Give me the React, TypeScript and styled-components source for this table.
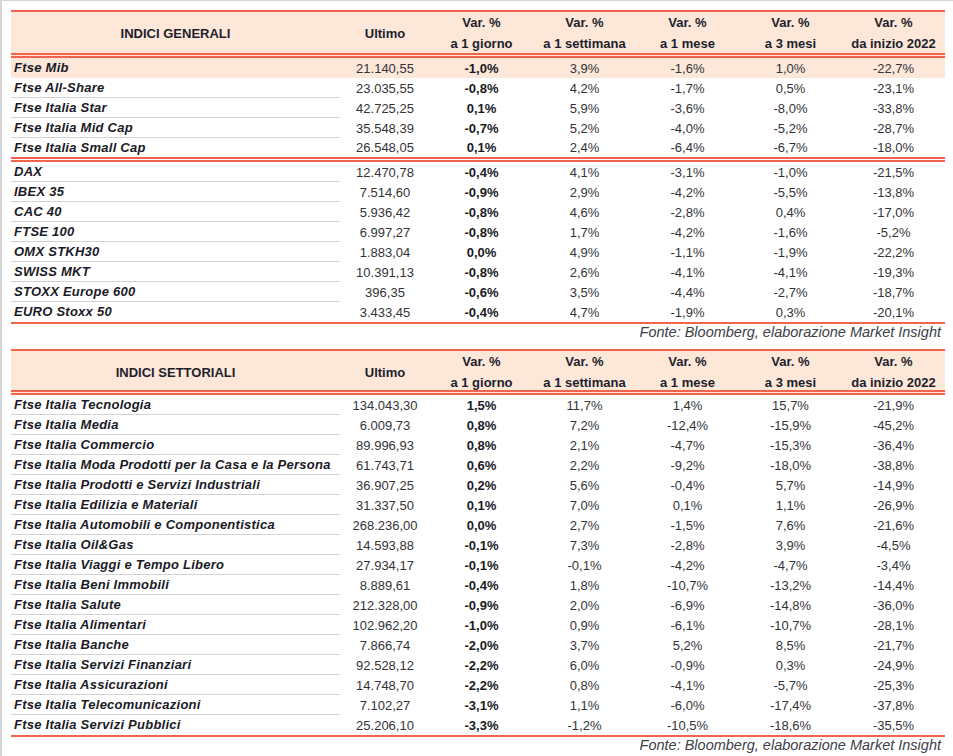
import React from 'react';
import styled, { createGlobalStyle } from 'styled-components';

type Row = [string, string, string, string, string, string, string];

const generali: Row[][] = [
  [
    ['Ftse Mib', '21.140,55', '-1,0%', '3,9%', '-1,6%', '1,0%', '-22,7%'],
    ['Ftse All-Share', '23.035,55', '-0,8%', '4,2%', '-1,7%', '0,5%', '-23,1%'],
    ['Ftse Italia Star', '42.725,25', '0,1%', '5,9%', '-3,6%', '-8,0%', '-33,8%'],
    ['Ftse Italia Mid Cap', '35.548,39', '-0,7%', '5,2%', '-4,0%', '-5,2%', '-28,7%'],
    ['Ftse Italia Small Cap', '26.548,05', '0,1%', '2,4%', '-6,4%', '-6,7%', '-18,0%'],
  ],
  [
    ['DAX', '12.470,78', '-0,4%', '4,1%', '-3,1%', '-1,0%', '-21,5%'],
    ['IBEX 35', '7.514,60', '-0,9%', '2,9%', '-4,2%', '-5,5%', '-13,8%'],
    ['CAC 40', '5.936,42', '-0,8%', '4,6%', '-2,8%', '0,4%', '-17,0%'],
    ['FTSE 100', '6.997,27', '-0,8%', '1,7%', '-4,2%', '-1,6%', '-5,2%'],
    ['OMX STKH30', '1.883,04', '0,0%', '4,9%', '-1,1%', '-1,9%', '-22,2%'],
    ['SWISS MKT', '10.391,13', '-0,8%', '2,6%', '-4,1%', '-4,1%', '-19,3%'],
    ['STOXX Europe 600', '396,35', '-0,6%', '3,5%', '-4,4%', '-2,7%', '-18,7%'],
    ['EURO Stoxx 50', '3.433,45', '-0,4%', '4,7%', '-1,9%', '0,3%', '-20,1%'],
  ],
];

const settoriali: Row[][] = [
  [
    ['Ftse Italia Tecnologia', '134.043,30', '1,5%', '11,7%', '1,4%', '15,7%', '-21,9%'],
    ['Ftse Italia Media', '6.009,73', '0,8%', '7,2%', '-12,4%', '-15,9%', '-45,2%'],
    ['Ftse Italia Commercio', '89.996,93', '0,8%', '2,1%', '-4,7%', '-15,3%', '-36,4%'],
    ['Ftse Italia Moda Prodotti per la Casa e la Persona', '61.743,71', '0,6%', '2,2%', '-9,2%', '-18,0%', '-38,8%'],
    ['Ftse Italia Prodotti e Servizi Industriali', '36.907,25', '0,2%', '5,6%', '-0,4%', '5,7%', '-14,9%'],
    ['Ftse Italia Edilizia e Materiali', '31.337,50', '0,1%', '7,0%', '0,1%', '1,1%', '-26,9%'],
    ['Ftse Italia Automobili e Componentistica', '268.236,00', '0,0%', '2,7%', '-1,5%', '7,6%', '-21,6%'],
    ['Ftse Italia Oil&Gas', '14.593,88', '-0,1%', '7,3%', '-2,8%', '3,9%', '-4,5%'],
    ['Ftse Italia Viaggi e Tempo Libero', '27.934,17', '-0,1%', '-0,1%', '-4,2%', '-4,7%', '-3,4%'],
    ['Ftse Italia Beni Immobili', '8.889,61', '-0,4%', '1,8%', '-10,7%', '-13,2%', '-14,4%'],
    ['Ftse Italia Salute', '212.328,00', '-0,9%', '2,0%', '-6,9%', '-14,8%', '-36,0%'],
    ['Ftse Italia Alimentari', '102.962,20', '-1,0%', '0,9%', '-6,1%', '-10,7%', '-28,1%'],
    ['Ftse Italia Banche', '7.866,74', '-2,0%', '3,7%', '5,2%', '8,5%', '-21,7%'],
    ['Ftse Italia Servizi Finanziari', '92.528,12', '-2,2%', '6,0%', '-0,9%', '0,3%', '-24,9%'],
    ['Ftse Italia Assicurazioni', '14.748,70', '-2,2%', '0,8%', '-4,1%', '-5,7%', '-25,3%'],
    ['Ftse Italia Telecomunicazioni', '7.102,27', '-3,1%', '1,1%', '-6,0%', '-17,4%', '-37,8%'],
    ['Ftse Italia Servizi Pubblici', '25.206,10', '-3,3%', '-1,2%', '-10,5%', '-18,6%', '-35,5%'],
  ],
];

const periods = ['a 1 giorno', 'a 1 settimana', 'a 1 mese', 'a 3 mesi', 'da inizio 2022'];

const RED = '#f0644e';
const PEACH = '#fce7d9';
const COLS = '329px 90px repeat(5, 103px)';

const GlobalStyle = createGlobalStyle`
  body {
    margin: 0;
    background: #fff;
    font-family: "Liberation Sans", Arial, sans-serif;
  }
`;

const Page = styled.div`
  min-height: 100vh;
  box-sizing: border-box;
  border-top: 1px solid #d6d6d6;
  border-left: 2px solid #d6d6d6;
  padding: 9px 0 0 9px;
`;

const Table = styled.div`
  width: 934px;
`;

const Header = styled.div<{ $h: number }>`
  display: grid;
  grid-template-columns: ${COLS};
  height: ${(p) => p.$h}px;
  background: ${PEACH};
  border-top: 2px solid ${RED};
  border-bottom: 5px double ${RED};
`;

const HeadCell = styled.div`
  display: flex;
  flex-direction: column;
  align-items: center;
  justify-content: center;
  padding-bottom: 1px;
  font-size: 13px;
  font-weight: 700;
  line-height: 21px;
  color: #1e1e2c;
  white-space: nowrap;
`;

const DataRow = styled.div<{ $hl?: boolean; $end?: 'double' | 'single' }>`
  display: grid;
  grid-template-columns: ${COLS};
  height: ${(p) => (p.$end === 'double' ? 19 : 20)}px;
  background: ${(p) => (p.$hl ? PEACH : 'transparent')};
  border-bottom: ${(p) =>
    p.$end === 'double' ? `5px double ${RED}` : p.$end === 'single' ? `2px solid ${RED}` : 'none'};
`;

const Name = styled.div<{ $line: boolean }>`
  box-sizing: border-box;
  display: flex;
  align-items: center;
  padding-left: 3px;
  border-bottom: 1px solid ${(p) => (p.$line ? '#d3d3d3' : 'transparent')};
  font-size: 13px;
  font-weight: 700;
  font-style: italic;
  letter-spacing: 0.25px;
  color: #1a1a26;
  white-space: nowrap;
`;

const Value = styled.div<{ $bold?: boolean }>`
  display: flex;
  align-items: center;
  justify-content: center;
  font-size: 13px;
  font-weight: ${(p) => (p.$bold ? 700 : 400)};
  color: ${(p) => (p.$bold ? '#1a1a26' : '#333338')};
`;

const Source = styled.div`
  width: 934px;
  box-sizing: border-box;
  padding-right: 4px;
  margin-bottom: 9px;
  text-align: right;
  font-size: 14.5px;
  font-style: italic;
  line-height: 16px;
  color: #404048;
`;

const Section = ({ title, groups, headH }: { title: string; groups: Row[][]; headH: number }) => (
  <>
    <Table>
      <Header $h={headH}>
        <HeadCell>{title}</HeadCell>
        <HeadCell>Ultimo</HeadCell>
        {periods.map((p) => (
          <HeadCell key={p}>
            <span>Var. %</span>
            <span>{p}</span>
          </HeadCell>
        ))}
      </Header>
      {groups.map((rows, gi) =>
        rows.map((r, ri) => {
          const lastInGroup = ri === rows.length - 1;
          const lastGroup = gi === groups.length - 1;
          const end = lastInGroup ? (lastGroup ? 'single' : 'double') : undefined;
          const hl = r[0] === 'Ftse Mib';
          return (
            <DataRow key={r[0]} $hl={hl} $end={end}>
              <Name $line={!lastInGroup && !hl}>{r[0]}</Name>
              <Value>{r[1]}</Value>
              <Value $bold>{r[2]}</Value>
              <Value>{r[3]}</Value>
              <Value>{r[4]}</Value>
              <Value>{r[5]}</Value>
              <Value>{r[6]}</Value>
            </DataRow>
          );
        })
      )}
    </Table>
    <Source>Fonte: Bloomberg, elaborazione Market Insight</Source>
  </>
);

const App = () => (
  <Page>
    <GlobalStyle />
    <Section title="INDICI GENERALI" groups={generali} headH={41} />
    <Section title="INDICI SETTORIALI" groups={settoriali} headH={39} />
  </Page>
);

export default App;
